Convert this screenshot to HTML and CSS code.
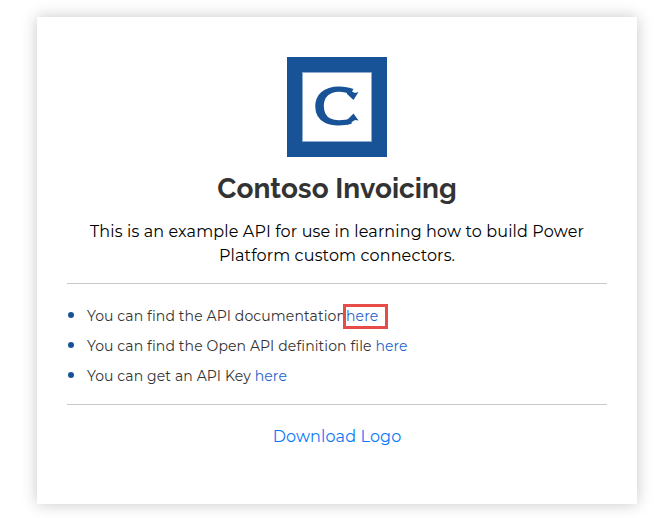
FILE: index.html
```html
<!DOCTYPE html>
<html lang="en">
<head>
<meta charset="utf-8">
<title>Contoso Invoicing</title>
<link rel="stylesheet" href="styles.css">
</head>
<body>
<main class="card">
  <svg class="logo" viewBox="0 0 100 100" role="img" aria-label="Contoso logo">
    <rect class="logo-frame" width="100" height="100"/>
    <rect class="logo-panel" x="15.5" y="15.5" width="69" height="69"/>
    <text class="logo-letter" transform="translate(24 68.2) scale(1.36 1)">C</text>
    <path class="logo-serif" d="M71.5 35 66.5 43 60 37 60 32 68 36zM71.5 63.5 68 63 60 68 60 63 66.5 56.5z"/>
  </svg>
  <h1 class="title">Contoso Invoicing</h1>
  <p class="intro">This is an example API for use in learning how to build Power<br>Platform custom connectors.</p>
  <ul class="links">
    <li>You can find the API documentation<a class="marked" href="#">here</a></li>
    <li>You can find the Open API definition file <a href="#">here</a></li>
    <li>You can get an API Key <a href="#">here</a></li>
  </ul>
  <a class="download" href="#">Download Logo</a>
</main>
</body>
</html>
```
FILE: styles.css
```css
*, *::before, *::after { box-sizing: border-box; }
body {
  margin: 0;
  min-height: 518px;
  padding: 17px 0 0 37px;
  background: #fff;
  font-family: Montserrat, Inter, sans-serif;
  color: #000;
}
.card {
  display: flex;
  flex-direction: column;
  align-items: center;
  width: 600px;
  height: 487px;
  padding: 40px 30px;
  background: #fff;
  box-shadow: 0 0 15px rgba(0, 0, 0, .22);
}
.logo { display: block; width: 100px; height: 100px; }
.logo-frame { fill: #185397; }
.logo-panel { fill: #fff; stroke: #8eabd0; stroke-width: .7; }
.logo-letter { font: 600 52px "Open Sans", sans-serif; fill: #185397; }
.logo-serif { fill: #185397; }
.title {
  margin: 15px 0 0;
  font: 700 28px/34px Raleway, Lato, sans-serif;
  color: #333;
  white-space: nowrap;
}
.intro {
  margin: 14px 0 0;
  font-size: 16px;
  line-height: 24px;
  letter-spacing: .135px;
  text-align: center;
  white-space: nowrap;
}
.links {
  width: 100%;
  height: 122px;
  margin: 15px 0 0;
  padding: 17px 0 0;
  border-top: 1px solid #c9c9c9;
  border-bottom: 1px solid #c9c9c9;
  list-style: none;
  font-size: 14px;
  line-height: 30px;
  letter-spacing: .115px;
  color: #333;
}
.links li {
  position: relative;
  height: 30px;
  padding-left: 20px;
  white-space: nowrap;
}
.links li::before {
  content: "";
  position: absolute;
  left: .75px;
  top: 10.75px;
  width: 6.5px;
  height: 6.5px;
  border-radius: 50%;
  background: #185397;
}
.links a { position: relative; color: #1e62cc; text-decoration: none; }
.marked::after {
  content: "";
  position: absolute;
  left: -3px;
  top: -3px;
  width: 45px;
  height: 25px;
  border: 3px solid #e84c49;
}
.links + .download {
  margin-top: 20px;
  font-size: 16px;
  line-height: 24px;
  letter-spacing: .135px;
  color: #0b78f8;
  text-decoration: none;
}
```
